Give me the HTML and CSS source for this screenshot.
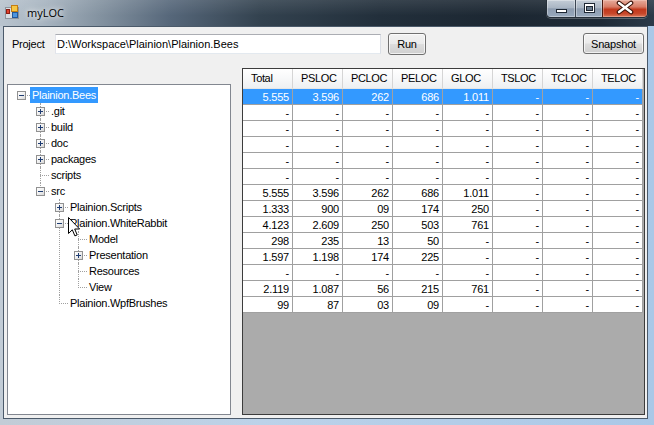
FILE: index.html
```html
<!DOCTYPE html>
<html>
<head>
<meta charset="utf-8">
<link rel="stylesheet" href="styles.css">
</head>
<body>
<div class="window">
  <div class="titlebar">
    <svg class="appicon" width="16" height="16" viewBox="0 0 16 16">
      <rect x="1.5" y="3.5" width="13" height="11" fill="#d9dde2" stroke="#8d949c"/>
      <rect x="7.5" y="1.5" width="6" height="6" fill="#f6c744" stroke="#c47d12"/>
      <rect x="2.5" y="5.5" width="3" height="4" fill="#e0402c" stroke="#8e1d12"/>
      <rect x="8.5" y="8.5" width="5" height="5" fill="#4d95de" stroke="#22589c"/>
    </svg>
    <span class="title">myLOC</span>
    <div class="caption">
      <div class="cbtn min">
        <svg width="28" height="17" viewBox="0 0 28 17"><rect x="9.5" y="9.5" width="10" height="3" fill="#fff" stroke="#1d2733"/></svg>
      </div>
      <div class="cbtn max">
        <svg width="26" height="17" viewBox="0 0 26 17"><rect x="8.5" y="3.5" width="10" height="9" fill="#fff" stroke="#1d2733"/><rect x="10.5" y="6.5" width="6" height="4" fill="#6a7b8d" stroke="#1d2733"/></svg>
      </div>
      <div class="cbtn close">
        <svg width="44" height="17" viewBox="0 0 44 17"><path d="M16 3 L28 12 M28 3 L16 12" stroke="#3a1208" stroke-width="4.6" stroke-linecap="round"/><path d="M16 3 L28 12 M28 3 L16 12" stroke="#fff" stroke-width="2.4" stroke-linecap="round"/></svg>
      </div>
    </div>
  </div>
  <div class="client">
    <div class="toolbar">
      <span class="label">Project</span>
      <div class="textbox">D:\Workspace\Plainion\Plainion.Bees</div>
      <button class="btn run">Run</button>
      <button class="btn snap">Snapshot</button>
    </div>
    <div class="main">
      <div class="tree">
        <ul>
          <li class="l0">
            <div class="row"><span class="exp minus"></span><span class="lbl sel">Plainion.Bees</span></div>
            <ul>
              <li class="l1"><div class="row"><span class="exp plus"></span><span class="lbl">.git</span></div></li>
              <li class="l1"><div class="row"><span class="exp plus"></span><span class="lbl">build</span></div></li>
              <li class="l1"><div class="row"><span class="exp plus"></span><span class="lbl">doc</span></div></li>
              <li class="l1"><div class="row"><span class="exp plus"></span><span class="lbl">packages</span></div></li>
              <li class="l1"><div class="row"><span class="exp none"></span><span class="lbl">scripts</span></div></li>
              <li class="l1">
                <div class="row"><span class="exp minus"></span><span class="lbl">src</span></div>
                <ul>
                  <li class="l2"><div class="row"><span class="exp plus"></span><span class="lbl">Plainion.Scripts</span></div></li>
                  <li class="l2">
                    <div class="row"><span class="exp minus"></span><span class="lbl">Plainion.WhiteRabbit</span></div>
                    <ul>
                      <li class="l3"><div class="row"><span class="exp none"></span><span class="lbl">Model</span></div></li>
                      <li class="l3"><div class="row"><span class="exp plus"></span><span class="lbl">Presentation</span></div></li>
                      <li class="l3"><div class="row"><span class="exp none"></span><span class="lbl">Resources</span></div></li>
                      <li class="l3"><div class="row"><span class="exp none"></span><span class="lbl">View</span></div></li>
                    </ul>
                  </li>
                  <li class="l2"><div class="row"><span class="exp none"></span><span class="lbl">Plainion.WpfBrushes</span></div></li>
                </ul>
              </li>
            </ul>
          </li>
        </ul>
        <svg class="cursor" width="13" height="20" viewBox="0 0 13 20"><path d="M0.5 0.5 L0.5 16.5 L4.3 12.8 L6.9 18.9 L9.2 17.9 L6.7 12 L11.6 12 Z" fill="#fff" stroke="#000" stroke-linejoin="miter"/></svg>
      </div>
      <div class="grid">
        <div class="gtable">
          <div class="hc">Total</div><div class="hc">PSLOC</div><div class="hc">PCLOC</div><div class="hc">PELOC</div><div class="hc">GLOC</div><div class="hc">TSLOC</div><div class="hc">TCLOC</div><div class="hc">TELOC</div>

          <div class="c s">5.555</div><div class="c s">3.596</div><div class="c s">262</div><div class="c s">686</div><div class="c s">1.011</div><div class="c s">-</div><div class="c s">-</div><div class="c s">-</div>

          <div class="c">-</div><div class="c">-</div><div class="c">-</div><div class="c">-</div><div class="c">-</div><div class="c">-</div><div class="c">-</div><div class="c">-</div>
          <div class="c">-</div><div class="c">-</div><div class="c">-</div><div class="c">-</div><div class="c">-</div><div class="c">-</div><div class="c">-</div><div class="c">-</div>
          <div class="c">-</div><div class="c">-</div><div class="c">-</div><div class="c">-</div><div class="c">-</div><div class="c">-</div><div class="c">-</div><div class="c">-</div>
          <div class="c">-</div><div class="c">-</div><div class="c">-</div><div class="c">-</div><div class="c">-</div><div class="c">-</div><div class="c">-</div><div class="c">-</div>
          <div class="c">-</div><div class="c">-</div><div class="c">-</div><div class="c">-</div><div class="c">-</div><div class="c">-</div><div class="c">-</div><div class="c">-</div>

          <div class="c">5.555</div><div class="c">3.596</div><div class="c">262</div><div class="c">686</div><div class="c">1.011</div><div class="c">-</div><div class="c">-</div><div class="c">-</div>
          <div class="c">1.333</div><div class="c">900</div><div class="c">09</div><div class="c">174</div><div class="c">250</div><div class="c">-</div><div class="c">-</div><div class="c">-</div>
          <div class="c">4.123</div><div class="c">2.609</div><div class="c">250</div><div class="c">503</div><div class="c">761</div><div class="c">-</div><div class="c">-</div><div class="c">-</div>
          <div class="c">298</div><div class="c">235</div><div class="c">13</div><div class="c">50</div><div class="c">-</div><div class="c">-</div><div class="c">-</div><div class="c">-</div>
          <div class="c">1.597</div><div class="c">1.198</div><div class="c">174</div><div class="c">225</div><div class="c">-</div><div class="c">-</div><div class="c">-</div><div class="c">-</div>
          <div class="c">-</div><div class="c">-</div><div class="c">-</div><div class="c">-</div><div class="c">-</div><div class="c">-</div><div class="c">-</div><div class="c">-</div>
          <div class="c">2.119</div><div class="c">1.087</div><div class="c">56</div><div class="c">215</div><div class="c">761</div><div class="c">-</div><div class="c">-</div><div class="c">-</div>
          <div class="c">99</div><div class="c">87</div><div class="c">03</div><div class="c">09</div><div class="c">-</div><div class="c">-</div><div class="c">-</div><div class="c">-</div>
        </div>
      </div>
    </div>
  </div>
</div>
</body>
</html>
```

FILE: styles.css
```css
* { box-sizing: border-box; }

body {
  margin: 0;
  width: 654px;
  height: 425px;
  overflow: hidden;
  font-family: "Liberation Sans", Arial, sans-serif;
  font-size: 11px;
  letter-spacing: -0.25px;
  color: #000;
}

.window {
  height: 425px;
  display: flex;
  flex-direction: column;
  background: linear-gradient(90deg, #c2ccd6 0%, #bcd2e9 40%, #aac8e7 100%);
}

/* ---------- title bar ---------- */
.titlebar {
  height: 26px;
  flex: none;
  display: flex;
  align-items: flex-start;
  background:
    linear-gradient(180deg, rgba(255,255,255,0.10) 0%, rgba(255,255,255,0) 60%),
    linear-gradient(90deg, #b9c4ce 0px, #a6b3bf 45px, #8392a0 100px, #56677a 170px, #33424f 260px, #222f3b 380px, #1c2732 500px, #1e2a36 600px, #2b3a49 654px);
}

.appicon { flex: none; margin: 4px 0 0 4px; }

.title {
  margin: 3px 0 0 7px;
  font-family: "Open Sans", "Liberation Sans", sans-serif;
  font-size: 11px;
  line-height: 20px;
  letter-spacing: 0;
  color: #000;
  text-shadow: 0 0 5px rgba(255,255,255,0.9), 0 0 9px rgba(255,255,255,0.7);
}

.caption {
  margin-left: auto;
  margin-right: 6px;
  display: flex;
  height: 18px;
  border: 1px solid #26303a;
  border-top: none;
  border-radius: 0 0 5px 5px;
  overflow: hidden;
  box-shadow: 0 1px 0 rgba(255,255,255,0.25);
}

.cbtn { height: 100%; display: flex; }
.cbtn svg { display: block; }

.cbtn.min, .cbtn.max {
  background: linear-gradient(180deg, #c4cdd7 0%, #aab6c4 45%, #8d9caf 52%, #98a9bd 100%);
  box-shadow: inset 0 0 0 1px rgba(255,255,255,0.35);
}
.cbtn.min { width: 28px; }
.cbtn.max { width: 27px; border-left: 1px solid #3a4552; }
.cbtn.close {
  width: 45px;
  border-left: 1px solid #4a1a10;
  background: linear-gradient(180deg, #e6ab9b 0%, #d77c66 40%, #c2391d 55%, #c8472a 80%, #da7a5d 100%);
  box-shadow: inset 0 0 0 1px rgba(255,220,210,0.35);
}

/* ---------- client area ---------- */
.client {
  flex: 1;
  margin: 0 6px 6px 3px;
  border: 1px solid #4b5a6a;
  background: #f0f0f0;
  display: flex;
  flex-direction: column;
  min-height: 0;
}

.toolbar {
  flex: none;
  height: 28px;
  display: flex;
  align-items: flex-start;
  padding: 6px 3px 0 8px;
}

.label {
  width: 43px;
  margin-top: 1px;
  line-height: 20px;
}

.textbox {
  width: 326px;
  height: 20px;
  margin-top: 1px;
  border: 1px solid;
  border-color: #abadb3 #dbdfe6 #e3e9ef #e2e3ea;
  background: #fff;
  padding-left: 1px;
  line-height: 18px;
  letter-spacing: 0;
  white-space: nowrap;
  overflow: hidden;
}

.btn {
  font-family: "Liberation Sans", Arial, sans-serif;
  font-size: 11px;
  letter-spacing: -0.2px;
  color: #000;
  padding: 0;
  border: 1px solid #707070;
  border-radius: 3px;
  background: linear-gradient(180deg, #f2f2f2 0%, #ebebeb 48%, #dddddd 52%, #cfcfcf 100%);
  box-shadow: inset 0 0 0 1px rgba(255,255,255,0.7);
}
.run { margin-left: 7px; width: 38px; height: 22px; }
.snap { margin-left: auto; width: 61px; height: 21px; }

.main {
  flex: 1;
  min-height: 0;
  display: flex;
  padding: 13px 2px 3px 3px;
}

/* ---------- tree ---------- */
.tree {
  flex: none;
  width: 224px;
  margin-top: 16px;
  border: 1px solid #828790;
  background: #fff;
  padding-top: 2px;
  position: relative;
  overflow: hidden;
}

.tree ul { list-style: none; margin: 0; padding: 0; }
.tree li { position: relative; }

.row {
  position: relative;
  z-index: 1;
  height: 16px;
  display: flex;
  align-items: flex-start;
  white-space: nowrap;
}
.l0 > .row { padding-left: 9px; }
.l1 > .row { padding-left: 28px; }
.l2 > .row { padding-left: 47px; }
.l3 > .row { padding-left: 66px; }

.exp {
  flex: none;
  position: relative;
  width: 9px;
  height: 9px;
  margin: 4px 4px 0 0;
  border: 1px solid #919191;
  background: linear-gradient(135deg, #ffffff 0%, #f0f0f0 50%, #d8d8d8 100%);
}
.exp::before {
  content: "";
  position: absolute;
  left: 1px;
  top: 3px;
  width: 5px;
  height: 1px;
  background: #1e3c72;
}
.exp.plus::after {
  content: "";
  position: absolute;
  left: 3px;
  top: 1px;
  width: 1px;
  height: 5px;
  background: #1e3c72;
}
.exp.none { visibility: hidden; }

.lbl {
  padding: 0 2px;
  height: 16px;
  line-height: 16px;
}
.lbl.sel { background: #3399ff; color: #fff; }

/* connector lines */
.tree li::after {
  content: "";
  position: absolute;
  top: 8px;
  width: 9px;
  border-top: 1px dotted #a0a0a0;
}
.l0::after { left: 13px; }
.l1::after { left: 32px; }
.l2::after { left: 51px; }
.l3::after { left: 70px; }

.l1::before, .l2::before, .l3::before {
  content: "";
  position: absolute;
  top: 0;
  bottom: 0;
  border-left: 1px dotted #a0a0a0;
}
.l1::before { left: 32px; }
.l2::before { left: 51px; }
.l3::before { left: 70px; }
.l1:last-child::before, .l2:last-child::before, .l3:last-child::before {
  bottom: auto;
  height: 9px;
}

.cursor {
  position: absolute;
  left: 60px;
  top: 132px;
  z-index: 5;
}

/* ---------- grid ---------- */
.grid {
  flex: none;
  width: 403px;
  margin-left: 11px;
  border: 1px solid #3c3c3c;
  background: #ababab;
  overflow: hidden;
}

.gtable {
  display: grid;
  grid-template-columns: repeat(8, 50px);
}

.hc {
  height: 20px;
  border-right: 1px solid #d5d5d5;
  border-bottom: 1px solid #e6e6e6;
  background: linear-gradient(180deg, #ffffff 0%, #f7f8f9 50%, #eef0f2 100%);
  padding-left: 8px;
  line-height: 19px;
  letter-spacing: -0.35px;
  white-space: nowrap;
}

.c {
  height: 16px;
  border-right: 1px solid #a0a0a0;
  border-bottom: 1px solid #a0a0a0;
  background: #fff;
  text-align: right;
  padding: 1px 3px 0 0;
  line-height: 15px;
  letter-spacing: -0.2px;
  white-space: nowrap;
}
.c.s { background: #3399ff; color: #fff; }
```
